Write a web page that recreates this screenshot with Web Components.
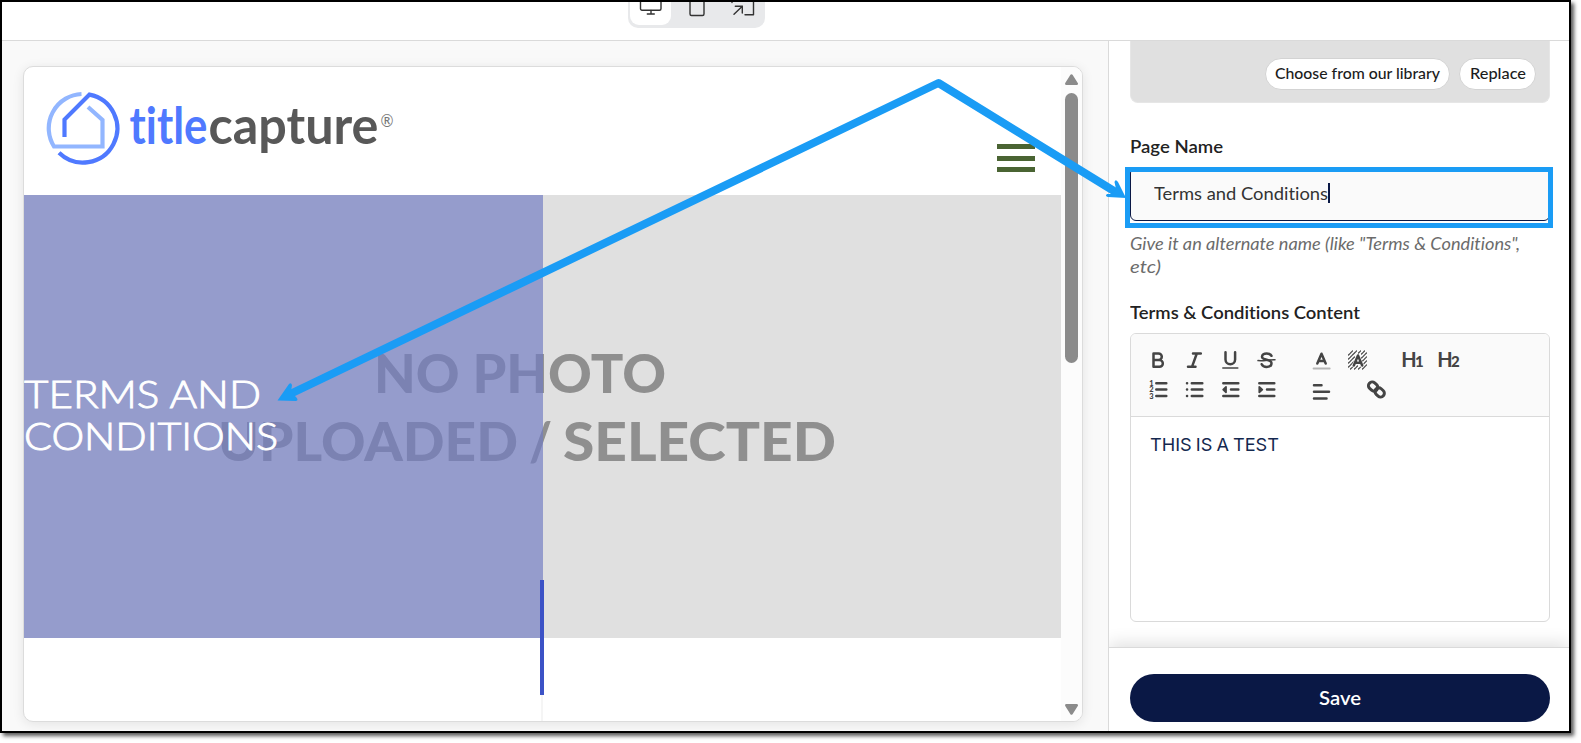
<!DOCTYPE html>
<html lang="en">
<head>
<meta charset="utf-8">
<title>Page editor</title>
<style>
    body {
        margin: 0;
        min-height: 743px;
        background: #fff;
        font-family: Lato, "Liberation Sans", sans-serif;
        font-variant-ligatures: none;
        color: #222;
    }
</style>
</head>
<body>
<page-editor></page-editor>

<script>
// Small base class: every element renders its template into an open root
class BaseElement extends HTMLElement {
    constructor() {
        super();
        this.attachShadow({ mode: 'open' });
    }

    connectedCallback() {
        this.shadowRoot.innerHTML = this.template();
        this.ready();
    }

    template() { return '<slot></slot>'; }

    ready() {}
}

// One line of text stretched to a given width
class FitText extends BaseElement {
    template() {
        return `
            <style>
                :host { display: block; white-space: nowrap; }
                span { display: inline-block; transform-origin: 0 50%; font-variant-ligatures: none; }
            </style>
            <span><slot></slot></span>
        `;
    }

    ready() {
        const width = parseFloat(this.getAttribute('width'));
        const span = this.shadowRoot.querySelector('span');
        const natural = span.getBoundingClientRect().width;
        this.style.width = width + 'px';
        if (natural) {
            span.style.transform = `scaleX(${width / natural})`;
        }
    }
}

class DeviceToggle extends BaseElement {
    template() {
        return `
            <style>
                :host {
                    display: flex;
                    gap: 5px;
                    padding: 2px 2px 3px;
                    border-radius: 10px;
                    background: #e8e9eb;
                }
                .item {
                    display: flex;
                    align-items: center;
                    justify-content: center;
                    width: 41px;
                    height: 40px;
                    border-radius: 9px;
                }
                .item.active { background: #fff; }
                svg { fill: none; stroke: #333; stroke-width: 1.4; stroke-linecap: round; stroke-linejoin: round; }
            </style>
            <div class="item active">
                <svg width="24" height="24" viewBox="0 0 24 24"><rect x="1.500" y="2" width="20.500" height="15.3" rx="1.5"/><path d="M12 17.5v3.300M8.300 21h7"/></svg>
            </div>
            <div class="item">
                <svg width="24" height="24" viewBox="0 0 24 24"><rect x="5" y="1" width="14" height="21.500" rx="1.5"/></svg>
            </div>
            <div class="item">
                <svg width="24" height="24" viewBox="0 0 24 24"><path d="M3 21.3l8.3-8M4.3 13.2h7v6.8M14 21.800h8.500V2H1v7.500"/></svg>
            </div>
        `;
    }
}

class TopBar extends BaseElement {
    template() {
        return `
            <style>
                :host {
                    display: flex;
                    align-items: flex-end;
                    box-sizing: border-box;
                    height: 39px;
                    padding: 0 0 12px 626px;
                    border-bottom: 1px solid #dadada;
                    background: #fff;
                    overflow: hidden;
                }
            </style>
            <device-toggle></device-toggle>
        `;
    }
}

class SiteLogo extends BaseElement {
    template() {
        return `
            <style>
                :host { display: block; height: 80px; }
                .mark { fill: none; stroke-width: 4.2; }
                .name { font: 700 51px Lato, sans-serif; font-variant-ligatures: none; }
            </style>
            <svg width="352" height="80" viewBox="46 90 352 80">
                <path class="mark" stroke="#92b6ff" d="M81.500 94A34.300 34.300 0 0 0 54 146.500H102.500V120L88 107"/>
                <path class="mark" stroke="#4f79ff" d="M64.500 137V119.500L89.500 94.600A34.300 34.300 0 1 1 59 152.800"/>
                <text class="name" x="129.500" y="143.500" fill="#4f79ff" textLength="78" lengthAdjust="spacingAndGlyphs">title</text>
                <text class="name" x="208.500" y="143.500" fill="#585858" textLength="170" lengthAdjust="spacingAndGlyphs">capture</text>
                <text x="380.500" y="127" fill="#777" font-family="Lato, sans-serif" font-size="17" textLength="13" lengthAdjust="spacingAndGlyphs">®</text>
            </svg>
        `;
    }
}

class SiteHeader extends BaseElement {
    template() {
        return `
            <style>
                :host {
                    display: flex;
                    justify-content: space-between;
                    align-items: flex-start;
                    box-sizing: border-box;
                    height: 128px;
                    padding: 23px 26px 0 22px;
                }
                .menu { display: grid; gap: 6.500px; width: 38px; margin-top: 54px; }
                .menu i { height: 5px; background: #4a6433; }
            </style>
            <site-logo></site-logo>
            <div class="menu"><i></i><i></i><i></i></div>
        `;
    }
}

class HeroBanner extends BaseElement {
    template() {
        return `
            <style>
                :host { display: grid; grid-template-columns: 519px 1fr; height: 443px; background: #e0e0e0; }
                .photo, .shade { grid-row: 1; box-sizing: border-box; }
                .photo {
                    grid-column: 1 / 3;
                    padding-top: 144px;
                    font: 900 53px/68px Lato, sans-serif;
                    color: #8f8f8f;
                }
                .first { margin-left: 350px; }
                .second { display: flex; gap: 11px; margin-left: 194px; }
                .shade {
                    grid-column: 1;
                    padding-top: 177px;
                    background: rgba(114, 124, 195, .68);
                    font: 300 38px/42px Lato, sans-serif;
                    -webkit-text-stroke: .9px #fff;
                    color: #fff;
                    z-index: 1;
                }
            </style>
            <div class="photo">
                <fit-text class="first" width="292">NO PHOTO</fit-text>
                <div class="second">
                    <fit-text width="300">UPLOADED</fit-text>
                    <fit-text width="23">/</fit-text>
                    <fit-text width="273">SELECTED</fit-text>
                </div>
            </div>
            <div class="shade">
                <fit-text width="237">TERMS AND</fit-text>
                <fit-text width="254">CONDITIONS</fit-text>
            </div>
        `;
    }
}

class ScrollRail extends BaseElement {
    template() {
        return `
            <style>
                :host {
                    display: flex;
                    flex-direction: column;
                    align-items: center;
                    box-sizing: border-box;
                    width: 21px;
                    padding: 7px 0 6px;
                    background: #fcfcfc;
                }
                .thumb { width: 13px; height: 270px; margin: 8px 0 auto; border-radius: 7px; background: #8b8b8b; }
                svg { fill: #8b8b8b; stroke: #8b8b8b; stroke-width: 2.500; stroke-linejoin: round; }
            </style>
            <svg width="13" height="11" viewBox="0 0 13 11"><path d="M6.500 1.500L11.700 9.700H1.300z"/></svg>
            <div class="thumb"></div>
            <svg width="13" height="11" viewBox="0 0 13 11"><path d="M6.500 9.500L11.700 1.300H1.300z"/></svg>
        `;
    }
}

class SitePreview extends BaseElement {
    template() {
        return `
            <style>
                :host { display: block; padding: 25px 25px 9px 21px; background: #f9f9f9; }
                .card {
                    display: grid;
                    grid-template-columns: 1fr 21px;
                    box-sizing: border-box;
                    height: 656px;
                    border: 1px solid #dcdcdc;
                    border-radius: 10px;
                    background: #fff;
                    box-shadow: 0 2px 12px rgba(0, 0, 0, .09);
                    overflow: hidden;
                }
                .site { display: flex; flex-direction: column; }
                .below { flex: 1; display: flex; padding-left: 516px; }
                .marker { width: 4px; height: 115px; margin-top: -58px; background: #3c52c6; z-index: 2; }
                .line { width: 2px; margin: 57px 0 0 -3px; background: #f5f5f5; }
            </style>
            <div class="card">
                <div class="site">
                    <site-header></site-header>
                    <hero-banner></hero-banner>
                    <div class="below"><div class="marker"></div><div class="line"></div></div>
                </div>
                <scroll-rail></scroll-rail>
            </div>
        `;
    }
}

class PillButton extends BaseElement {
    template() {
        return `
            <style>
                :host {
                    display: flex;
                    align-items: center;
                    justify-content: center;
                    box-sizing: border-box;
                    height: 32px;
                    padding-bottom: 1px;
                    border: 1px solid #d3d3d3;
                    border-radius: 16px;
                    background: #fff;
                    font-size: 15.500px;
                    font-weight: 500;
                    color: #1c1c1c;
                }
            </style>
            <slot></slot>
        `;
    }
}

const ICONS = {
    bold: '<path d="M5.500 3.500h5a3.300 3.300 0 0 1 0 6.600h-5zM5.500 10.100h6a3.300 3.300 0 0 1 0 6.700h-6z"/>',
    italic: '<path d="M9 3.500h7.800M4 16.800h7.500M12.800 3.500L8 16.800"/>',
    underline: '<path d="M5.500 2.200v7.300a4.800 4.800 0 0 0 9.600 0V2.200"/><path d="M2.800 18h15" stroke-width="1.500"/>',
    strike: '<path d="M15.500 5.800C14.500 4 12.800 3.400 10.700 3.400 8 3.400 6 4.700 6 6.800c0 4 9.500 2 9.500 6.200 0 2.500-2 3.900-4.800 3.900-2.400 0-4.200-.9-5-2.700"/><path d="M2 10.600c6 .8 11-1.200 17-.9" stroke-width="1.500"/>',
    color: '<path d="M6.300 13.500L10.500 3.700 14.700 13.500M7.800 11h5.500"/><path d="M2.600 18.600h16" stroke="#b5b5b5" stroke-width="2"/>',
    background: '<g stroke-width="1.200" stroke-dasharray="2 .7" transform="translate(.5 0)"><path d="M1 5l4-4M1 9l8-8M1 13L7 7M1 17l6-6M3 19l5-5M11 3l2-2M14 4l3-3M14 8l5-5M15 11l4-4M15 15l4-4M7 19l3-3M11 19l3-3M15 19l4-4"/></g><path stroke="#fafafa" stroke-width="4" d="M7 15.500L11 6l4 9.500"/><path d="M6.800 15.500L11 5.500l4.200 10M8.500 12.800h5"/>',
    h1: '<text x="-.8" y="16.800" font-size="20" textLength="13">H</text><text x="13" y="16.800" font-size="15">1</text>',
    h2: '<text x="-.8" y="16.800" font-size="20" textLength="13">H</text><text x="13" y="16.800" font-size="15">2</text>',
    ordered: '<path d="M8.300 3.200h10M8.300 9.600h10M8.300 16h10"/><g stroke="none"><text x="1.300" y="6" font-size="7.500">1</text><text x="1.300" y="12.200" font-size="7.500">2</text><text x="1.300" y="18.600" font-size="7.500">3</text></g>',
    bullets: '<path d="M7.800 3.200h10.500M7.800 9.600h10.500M7.800 16h10.500M3 3.200h.1M3 9.600h.1M3 16h.1"/>',
    outdent: '<path d="M3.300 3.200h15M11 9.600h7.300M3.300 16h15"/><path d="M6 6.900v5.400L3.200 9.600z" fill="#444" stroke-width="1.800"/>',
    indent: '<path d="M3.300 3.200h15M11 9.600h7.300M3.300 16h15"/><path d="M3.300 6.900v5.400l3-2.700z" fill="#444" stroke-width="1.800"/>',
    align: '<path d="M3 5.200h7.500M3 11.800h15M3 18.400h12.500"/>',
    link: '<g transform="rotate(42 10.500 9.500)" stroke-width="3"><rect x="1" y="5.800" width="10" height="7.500" rx="3.700"/><rect x="9.800" y="5.800" width="10" height="7.500" rx="3.700"/></g>'
};

class ToolIcon extends BaseElement {
    template() {
        return `
            <style>
                :host { display: block; width: 20px; height: 20px; }
                svg {
                    display: block;
                    overflow: visible;
                    fill: none;
                    stroke: #444;
                    stroke-width: 2.500;
                    stroke-linecap: round;
                    stroke-linejoin: round;
                }
                text { fill: #444; stroke: none; font-family: Lato, sans-serif; font-weight: 700; }
                text + text, g text { font-weight: 900; }
            </style>
            <svg width="20" height="20" viewBox="0 0 20 20">${ICONS[this.getAttribute('name')]}</svg>
        `;
    }
}

class EditorToolbar extends BaseElement {
    group(names) {
        return `<div class="group">${names.map(n => `<tool-icon name="${n}"></tool-icon>`).join('')}</div>`;
    }

    template() {
        return `
            <style>
                :host {
                    display: grid;
                    gap: 10px;
                    box-sizing: border-box;
                    height: 83px;
                    padding: 16px 17px;
                    border-bottom: 1px solid #dadada;
                    background: #fafafa;
                }
                .row { display: flex; gap: 35px; }
                .group { display: flex; gap: 16px; }
            </style>
            <div class="row">
                ${this.group(['bold', 'italic', 'underline', 'strike'])}
                ${this.group(['color', 'background'])}
                ${this.group(['h1', 'h2'])}
            </div>
            <div class="row">
                ${this.group(['ordered', 'bullets', 'outdent', 'indent'])}
                ${this.group(['align'])}
                ${this.group(['link'])}
            </div>
        `;
    }
}

class RichEditor extends BaseElement {
    template() {
        return `
            <style>
                :host {
                    display: block;
                    box-sizing: border-box;
                    height: 289px;
                    border: 1px solid #dadada;
                    border-radius: 6px;
                    overflow: hidden;
                    background: #fff;
                }
                .body {
                    padding: 16px 19px;
                    font: 400 17.500px/24px Inter, sans-serif;
                    word-spacing: -1px;
                    color: #14284f;
                }
            </style>
            <editor-toolbar></editor-toolbar>
            <div class="body"><slot></slot></div>
        `;
    }
}

class PageNameField extends BaseElement {
    template() {
        return `
            <style>
                :host {
                    display: flex;
                    align-items: center;
                    box-sizing: border-box;
                    height: 54px;
                    padding: 0 23px 2px;
                    border: 1px solid #0a1845;
                    border-radius: 6px;
                    background: #fafafa;
                    font-size: 18px;
                    color: #333;
                }
                .caret { width: 2px; height: 20px; background: #0a1845; }
            </style>
            <slot></slot><div class="caret"></div>
        `;
    }
}

class SettingsPanel extends BaseElement {
    template() {
        return `
            <style>
                :host {
                    display: flex;
                    flex-direction: column;
                    border-left: 1px solid #dadada;
                    background: #fff;
                    overflow: hidden;
                }
                .fields { flex: 1; padding: 0 19px 0 21px; }
                .image {
                    display: flex;
                    justify-content: flex-end;
                    align-items: flex-start;
                    gap: 9px;
                    box-sizing: border-box;
                    height: 62px;
                    padding: 16.500px 13px 0;
                    border: 1px solid #e6e6e6;
                    border-top: 0;
                    border-radius: 0 0 8px 8px;
                    background: #e0e0e0;
                }
                .library { width: 185px; }
                .replace { width: 77px; }
                .label { font-size: 17.500px; line-height: 24px; font-weight: 600; color: #222; }
                .name-label { margin-top: 32px; }
                page-name-field { margin-top: 8px; }
                .help { margin-top: 12px; font: italic 400 16.500px/23px Lato, sans-serif; color: #6b6b6b; }
                .content-label { margin-top: 22px; }
                rich-editor { margin-top: 8px; }
                .footer {
                    box-sizing: border-box;
                    height: 84px;
                    padding: 26px 19px 0 21px;
                    border-top: 1px solid #dadada;
                    background: #fff;
                    box-shadow: 0 -4px 16px rgba(0, 0, 0, .12);
                }
                .save {
                    display: flex;
                    align-items: center;
                    justify-content: center;
                    box-sizing: border-box;
                    height: 48px;
                    padding-bottom: 1px;
                    border-radius: 24px;
                    background: #0a1845;
                    color: #fff;
                    font-size: 19px;
                    font-weight: 600;
                }
            </style>
            <div class="fields">
                <div class="image">
                    <pill-button class="library"><fit-text width="165">Choose from our library</fit-text></pill-button>
                    <pill-button class="replace"><fit-text width="56">Replace</fit-text></pill-button>
                </div>
                <fit-text class="label name-label" width="93">Page Name</fit-text>
                <page-name-field><fit-text width="174">Terms and Conditions</fit-text></page-name-field>
                <div class="help">
                    <fit-text width="390">Give it an alternate name (like "Terms &amp; Conditions",</fit-text>
                    <fit-text width="31">etc)</fit-text>
                </div>
                <fit-text class="label content-label" width="230">Terms &amp; Conditions Content</fit-text>
                <rich-editor><fit-text width="129">THIS IS A TEST</fit-text></rich-editor>
            </div>
            <div class="footer"><div class="save"><fit-text width="42">Save</fit-text></div></div>
        `;
    }
}

// Callout box with two arrows, drawn over the whole window
class CalloutLayer extends BaseElement {
    template() {
        return `
            <style>
                :host { position: absolute; top: -2px; left: -2px; z-index: 5; pointer-events: none; }
                svg { display: block; fill: none; stroke: #1a9cf5; }
            </style>
            <svg width="1571" height="733" viewBox="0 0 1571 733">
                <rect x="1127.500" y="169.500" width="423" height="56" stroke-width="5"/>
                <path stroke-width="8" stroke-linejoin="round" d="M286 396L938.500 83L1118 193.500"/>
                <g fill="#1a9cf5" stroke="none">
                    <path d="M277.500 400.500L289 384Q291 382 292 385L291 392L296 397Q299 400.500 296 401Z"/>
                    <path d="M1126 198L1118 182Q1115.500 178.500 1114.500 182L1116 189L1112 194L1107 194Q1104.500 196 1108 197Z"/>
                </g>
            </svg>
        `;
    }
}

class PageEditor extends BaseElement {
    template() {
        return `
            <style>
                :host {
                    display: grid;
                    grid-template-rows: 39px 1fr;
                    position: relative;
                    box-sizing: border-box;
                    width: 1571px;
                    height: 733px;
                    border: 2px solid #000;
                    background: #fff;
                    box-shadow: 3px 3px 4px rgba(0, 0, 0, .65);
                }
                main { display: grid; grid-template-columns: 1fr 461px; min-height: 0; overflow: hidden; }
            </style>
            <top-bar></top-bar>
            <main>
                <site-preview></site-preview>
                <settings-panel></settings-panel>
            </main>
            <callout-layer></callout-layer>
        `;
    }
}

customElements.define('fit-text', FitText);
customElements.define('device-toggle', DeviceToggle);
customElements.define('top-bar', TopBar);
customElements.define('site-logo', SiteLogo);
customElements.define('site-header', SiteHeader);
customElements.define('hero-banner', HeroBanner);
customElements.define('scroll-rail', ScrollRail);
customElements.define('site-preview', SitePreview);
customElements.define('pill-button', PillButton);
customElements.define('tool-icon', ToolIcon);
customElements.define('editor-toolbar', EditorToolbar);
customElements.define('rich-editor', RichEditor);
customElements.define('page-name-field', PageNameField);
customElements.define('settings-panel', SettingsPanel);
customElements.define('callout-layer', CalloutLayer);
customElements.define('page-editor', PageEditor);
</script>
</body>
</html>
